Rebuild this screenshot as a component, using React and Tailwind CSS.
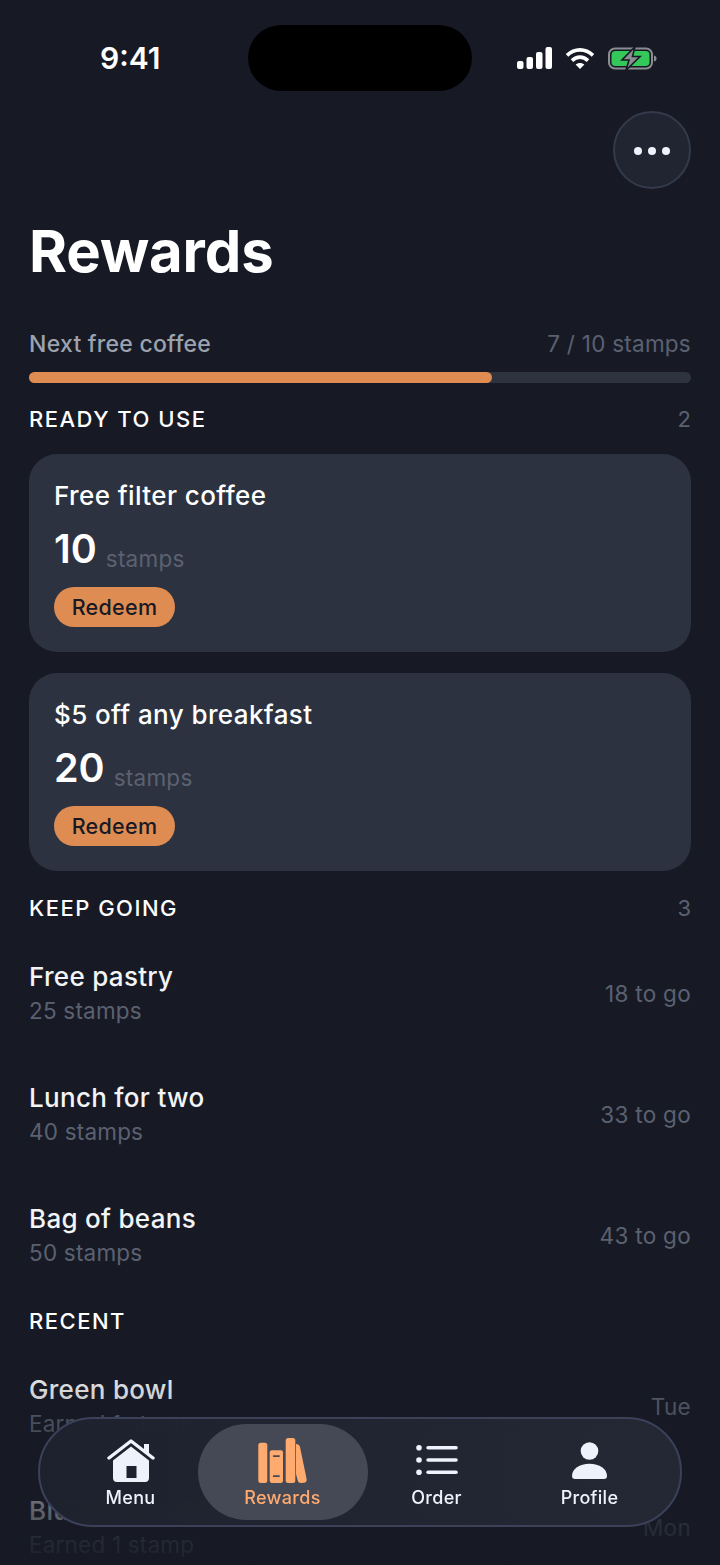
import { useState } from 'react';

const keepGoing = [
  { name: 'Free pastry', stamps: '25 stamps', left: '18 to go' },
  { name: 'Lunch for two', stamps: '40 stamps', left: '33 to go' },
  { name: 'Bag of beans', stamps: '50 stamps', left: '43 to go' },
];

const recent = [
  { name: 'Green bowl', stamps: 'Earned 1 stamp', left: 'Tue' },
  { name: 'Blueberry muffin', stamps: 'Earned 1 stamp', left: 'Mon' },
];

const ready = [
  { name: 'Free filter coffee', stamps: '10' },
  { name: '$5 off any breakfast', stamps: '20' },
];

function StatusIcons() {
  return (
    <div className="flex items-center gap-[13px]">
      <svg width="35" height="22" viewBox="0 0 35 22" fill="#fff">
        <rect x="0" y="14" width="6.5" height="8" rx="2" />
        <rect x="9.5" y="10" width="6.5" height="12" rx="2" />
        <rect x="19" y="5" width="6.5" height="17" rx="2" />
        <rect x="28.5" y="0" width="6.5" height="22" rx="2" />
      </svg>
      <svg width="30" height="22" viewBox="0 0 30 22" fill="none" stroke="#fff" strokeWidth="3.6">
        <path d="M2 8.4 C9.5 1 20.5 1 28 8.4" />
        <path d="M7 13.6 C11.8 9 18.2 9 23 13.6" />
        <path d="M15 22 L10.6 17.6 C13 15.4 17 15.4 19.4 17.6 Z" fill="#fff" stroke="none" />
      </svg>
      <svg width="49" height="25" viewBox="0 0 49 25" fill="none">
        <rect x="1" y="2.5" width="43" height="20" rx="6" stroke="#8a8d92" strokeWidth="2" />
        <rect x="3.5" y="5" width="38" height="15" rx="4" fill="#34c759" />
        <path d="M46 9.5 C48 10 48.5 11 48.5 12.5 C48.5 14 48 15 46 15.5 Z" fill="#8a8d92" />
        <path d="M27 0.8 L14 14 L21 14 L18 24.2 L32 10.5 L24.5 10.5 Z" fill="#8a8d92" stroke="#171a25" strokeWidth="1.6" />
      </svg>
    </div>
  );
}

function HomeIcon() {
  return (
    <svg width="48" height="43" viewBox="0 0 48 43" fill="none">
      <path d="M2 19 L24 2 L46 19" stroke="#eef2fb" strokeWidth="3.4" strokeLinecap="round" strokeLinejoin="round" />
      <path d="M37 5 H42 V15 L37 11 Z" fill="#eef2fb" />
      <path fillRule="evenodd" clipRule="evenodd" d="M24 7.5 L42 21.5 V39 C42 41.5 40.5 43 38 43 H10 C7.5 43 6 41.5 6 39 V21.5 Z M19.5 27 V39 H29.5 V27 Z" fill="#eef2fb" />
    </svg>
  );
}

function BooksIcon() {
  return (
    <svg width="49" height="45" viewBox="0 0 49 45" fill="#ffab70">
      <rect x="0.3" y="4.7" width="9" height="40.3" rx="2.5" />
      <path fillRule="evenodd" clipRule="evenodd" d="M14 12.3 H23 C24.3 12.3 25 13.3 25 14.5 V42.5 C25 44 24.3 45 23 45 H14 C12.5 45 11.7 44 11.7 42.5 V14.5 C11.7 13.3 12.5 12.3 14 12.3 Z M15 17.2 V19 H21.7 V17.2 Z M15 37.2 V39 H21.7 V37.2 Z" />
      <rect x="27.7" y="0" width="9.6" height="45" rx="2.5" />
      <path d="M38 6 C40 6 41.5 7 42 9 L48.6 41 C49 43.5 47.6 44.6 46 44.8 L43 45 C41 45 40 43.8 39.6 42 L38 36 Z" />
    </svg>
  );
}

function ListIcon() {
  return (
    <svg width="42" height="30" viewBox="0 0 42 30" fill="#eef2fb">
      <circle cx="3" cy="2.8" r="2.8" />
      <circle cx="3" cy="15" r="2.8" />
      <circle cx="3" cy="27.2" r="2.8" />
      <rect x="10.3" y="1.1" width="31.5" height="3.4" rx="1.7" />
      <rect x="10.3" y="13.3" width="31.5" height="3.4" rx="1.7" />
      <rect x="10.3" y="25.5" width="31.5" height="3.4" rx="1.7" />
    </svg>
  );
}

function PersonIcon() {
  return (
    <svg width="35" height="37" viewBox="0 0 35 37" fill="#eef2fb">
      <circle cx="17.5" cy="9" r="8.8" />
      <path d="M17.5 21.7 C27.5 21.7 35 27 35 33.8 C35 36 34 37 32 37 H3 C1 37 0 36 0 33.8 C0 27 7.5 21.7 17.5 21.7 Z" />
    </svg>
  );
}

function SectionHead({ title, count }) {
  return (
    <div className="flex items-center justify-between">
      <h2 className="text-[22px] leading-[28px] font-medium tracking-[1.5px] text-white">{title}</h2>
      {count && <span className="text-[22px] leading-[28px] text-[#5b6170]">{count}</span>}
    </div>
  );
}

function Row({ name, stamps, left }) {
  return (
    <div className="flex h-[121px] items-center justify-between">
      <div>
        <p className="text-[26px] leading-[34px] font-medium tracking-[0.3px] text-[#f3f4f6]">{name}</p>
        <p className="text-[22.5px] leading-[34px] tracking-[0.2px] text-[#5b6170]">{stamps}</p>
      </div>
      <span className="text-[22.5px] tracking-[0.3px] text-[#5b6170]">{left}</span>
    </div>
  );
}

function Tab({ icon, label, active, className }) {
  return (
    <div className={`flex h-[96px] flex-col items-center justify-end rounded-full pb-[10px] ${active ? 'bg-[#444955]' : ''} ${className}`}>
      <div className="flex h-[46px] items-center justify-center">{icon}</div>
      <span className={`mt-[3px] text-[18px] leading-[24px] font-medium tracking-[0.3px] ${active ? 'text-[#ffab70]' : 'text-[#eef2fb]'}`}>{label}</span>
    </div>
  );
}

export default function App() {
  const [tab] = useState('Rewards');

  return (
    <div className="relative h-[1565px] w-[720px] overflow-hidden bg-[#171a25] font-['Inter',sans-serif] text-white">
      {/* Status bar */}
      <div className="mt-[25px] flex h-[66px] items-center justify-between pr-[63px] pl-[100px]">
        <span className="w-[62px] text-[30px] leading-none font-semibold">9:41</span>
        <div className="ml-[86px] h-[66px] w-[224px] rounded-full bg-black" />
        <div className="ml-auto"><StatusIcons /></div>
      </div>

      <div className="px-[29px]">
        <div className="mt-[20px] flex justify-end">
          <button className="flex h-[78px] w-[78px] items-center justify-center gap-[6px] rounded-full border-2 border-[#333a4b] bg-[#212531] pt-[2px]">
            <span className="h-[8px] w-[8px] rounded-full bg-[#eef2fb]" />
            <span className="h-[8px] w-[8px] rounded-full bg-[#eef2fb]" />
            <span className="h-[8px] w-[8px] rounded-full bg-[#eef2fb]" />
          </button>
        </div>

        <h1 className="mt-[27px] text-[58px] leading-[70px] font-bold tracking-[-0.1px]">Rewards</h1>

        {/* Progress */}
        <div className="mt-[43px] flex items-center justify-between">
          <span className="text-[23px] leading-[30px] font-medium tracking-[0.25px] text-[#9ca3af]">Next free coffee</span>
          <span className="text-[22.5px] leading-[30px] tracking-[0.25px] text-[#5b6170]">7 / 10 stamps</span>
        </div>
        <div className="mt-[13px] h-[11px] rounded-full bg-[#2e3340]">
          <div className="h-full w-[70%] rounded-full bg-[#df8c52]" />
        </div>

        <div className="mt-[22px]"><SectionHead title="READY TO USE" count="2" /></div>

        <div className="mt-[21px] flex flex-col gap-[21px]">
          {ready.map((r) => (
            <div key={r.name} className="h-[198px] rounded-[28px] bg-[#2d3240] px-[25px] pt-[25px]">
              <p className="text-[26px] leading-[34px] font-medium tracking-[0.4px]">{r.name}</p>
              <div className="mt-[11px] flex items-end gap-[9px]">
                <span className="text-[39.5px] leading-[50px] font-semibold">{r.stamps}</span>
                <span className="text-[22.5px] leading-[30px] tracking-[0.25px] text-[#5b6170]">stamps</span>
              </div>
              <button className="mt-[13px] block h-[40px] w-[121px] rounded-full bg-[#df8c52] text-[21.5px] font-medium tracking-[0.3px] text-[#171a26]">Redeem</button>
            </div>
          ))}
        </div>

        <div className="mt-[23px]"><SectionHead title="KEEP GOING" count="3" /></div>
        <div className="mt-[11px]">
          {keepGoing.map((r) => <Row key={r.name} {...r} />)}
        </div>

        <div className="mt-[11px]"><SectionHead title="RECENT" /></div>
        <div className="mt-[11px]">
          {recent.map((r) => <Row key={r.name} {...r} />)}
        </div>
      </div>

      {/* Fade over the list */}
      <div className="pointer-events-none absolute inset-x-0 bottom-0 h-[205px] bg-gradient-to-b from-[#171a25]/0 to-[#171a25]/90" />

      {/* Tab bar */}
      <nav className="absolute top-[1417px] left-[38px] flex h-[110px] w-[644px] items-center rounded-full border-2 border-[#3b4159] bg-gradient-to-r from-[#1e222e]/95 to-[#252935]/95 pl-[35.5px] backdrop-blur-md">
        <Tab icon={<HomeIcon />} label="Menu" active={tab === 'Menu'} className="w-[110px]" />
        <Tab icon={<BooksIcon />} label="Rewards" active={tab === 'Rewards'} className="ml-[12px] w-[170px]" />
        <Tab icon={<ListIcon />} label="Order" active={tab === 'Order'} className="ml-[4px] w-[130px]" />
        <Tab icon={<PersonIcon />} label="Profile" active={tab === 'Profile'} className="ml-[23px] w-[130px]" />
      </nav>
    </div>
  );
}
